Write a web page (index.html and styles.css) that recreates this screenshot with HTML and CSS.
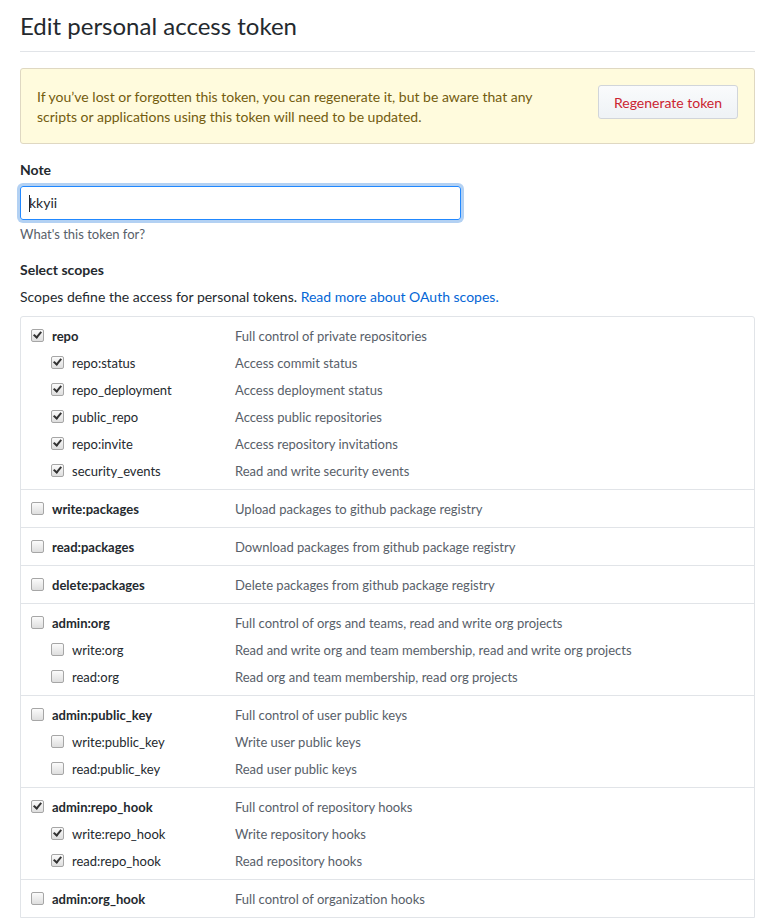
FILE: index.html
```html
<!DOCTYPE html>
<html lang="en">
<head>
<meta charset="utf-8">
<title>Edit personal access token</title>
<link rel="stylesheet" href="styles.css">
</head>
<body>
<div class="page">
  <h1 class="subhead">Edit personal access token</h1>

  <div class="flash">
    <p class="flash-text">If you’ve lost or forgotten this token, you can regenerate it, but be aware that any<br>scripts or applications using this token will need to be updated.</p>
    <button class="btn-danger" type="button">Regenerate token</button>
  </div>

  <div class="field">
    <label class="field-label">Note</label>
    <div class="input"><span class="caret"></span>kkyii</div>
    <p class="note">What's this token for?</p>
  </div>

  <div class="field">
    <div class="field-label">Select scopes</div>
    <p class="scopes-intro">Scopes define the access for personal tokens. <a href="#">Read more about OAuth scopes.</a></p>
  </div>

  <div class="scopes">
    <div class="group">
      <div class="row main"><span class="cb checked"></span><span class="name">repo</span><span class="desc">Full control of private repositories</span></div>
      <div class="row sub"><span class="cb checked"></span><span class="name">repo:status</span><span class="desc">Access commit status</span></div>
      <div class="row sub"><span class="cb checked"></span><span class="name">repo_deployment</span><span class="desc">Access deployment status</span></div>
      <div class="row sub"><span class="cb checked"></span><span class="name">public_repo</span><span class="desc">Access public repositories</span></div>
      <div class="row sub"><span class="cb checked"></span><span class="name">repo:invite</span><span class="desc">Access repository invitations</span></div>
      <div class="row sub"><span class="cb checked"></span><span class="name">security_events</span><span class="desc">Read and write security events</span></div>
    </div>
    <div class="group">
      <div class="row main"><span class="cb"></span><span class="name">write:packages</span><span class="desc">Upload packages to github package registry</span></div>
    </div>
    <div class="group">
      <div class="row main"><span class="cb"></span><span class="name">read:packages</span><span class="desc">Download packages from github package registry</span></div>
    </div>
    <div class="group">
      <div class="row main"><span class="cb"></span><span class="name">delete:packages</span><span class="desc">Delete packages from github package registry</span></div>
    </div>
    <div class="group">
      <div class="row main"><span class="cb"></span><span class="name">admin:org</span><span class="desc">Full control of orgs and teams, read and write org projects</span></div>
      <div class="row sub"><span class="cb"></span><span class="name">write:org</span><span class="desc">Read and write org and team membership, read and write org projects</span></div>
      <div class="row sub"><span class="cb"></span><span class="name">read:org</span><span class="desc">Read org and team membership, read org projects</span></div>
    </div>
    <div class="group">
      <div class="row main"><span class="cb"></span><span class="name">admin:public_key</span><span class="desc">Full control of user public keys</span></div>
      <div class="row sub"><span class="cb"></span><span class="name">write:public_key</span><span class="desc">Write user public keys</span></div>
      <div class="row sub"><span class="cb"></span><span class="name">read:public_key</span><span class="desc">Read user public keys</span></div>
    </div>
    <div class="group">
      <div class="row main"><span class="cb checked"></span><span class="name">admin:repo_hook</span><span class="desc">Full control of repository hooks</span></div>
      <div class="row sub"><span class="cb checked"></span><span class="name">write:repo_hook</span><span class="desc">Write repository hooks</span></div>
      <div class="row sub"><span class="cb checked"></span><span class="name">read:repo_hook</span><span class="desc">Read repository hooks</span></div>
    </div>
    <div class="group">
      <div class="row main"><span class="cb"></span><span class="name">admin:org_hook</span><span class="desc">Full control of organization hooks</span></div>
    </div>
  </div>
</div>
</body>
</html>
```

FILE: styles.css
```css
html, body {
  margin: 0;
  padding: 0;
  background: #fff;
}

body {
  font-family: "Lato", "Open Sans", sans-serif;
  font-size: 14px;
  line-height: 20px;
  color: #24292e;
}

.page {
  width: 735px;
  margin-left: 20px;
}

.subhead {
  margin: 0;
  padding: 11px 0 10px;
  font-size: 24px;
  line-height: 30px;
  font-weight: 400;
  border-bottom: 1px solid #e1e4e8;
}

.flash {
  margin-top: 16px;
  display: flex;
  justify-content: space-between;
  align-items: flex-start;
  padding: 16px;
  background: #fffbdd;
  border: 1px solid #dfd8c2;
  border-radius: 3px;
  color: #735c0f;
}

.flash-text {
  margin: 2px 0 0;
}

.btn-danger {
  width: 140px;
  height: 34px;
  padding: 0;
  font-family: inherit;
  font-size: 14px;
  color: #cb2431;
  background: linear-gradient(#fafbfc, #eff3f6 90%);
  border: 1px solid #d1d5da;
  border-radius: 3px;
}

.field {
  margin-top: 16px;
}

.field-label {
  display: block;
  font-weight: 700;
  line-height: 20px;
}

.input {
  margin-top: 6px;
  width: 439px;
  height: 32px;
  box-sizing: content-box;
  border: 1px solid #2188ff;
  border-radius: 3px;
  box-shadow: 0 0 0 3px rgba(3, 102, 214, 0.3);
  display: flex;
  align-items: center;
}

.input::before {
  content: "";
  width: 8px;
}

.caret {
  width: 1px;
  height: 17px;
  background: #24292e;
  margin-right: -1px;
}

.note {
  margin: 4px 0 0;
  font-size: 13px;
  line-height: 20px;
  color: #586069;
}

.scopes-intro {
  margin: 7px 0 0;
}

.scopes-intro a {
  color: #0366d6;
  text-decoration: none;
}

.scopes {
  margin-top: 9px;
  border: 1px solid #e1e4e8;
  border-radius: 3px 3px 0 0;
  font-size: 13px;
}

.group {
  padding: 9px 10px 8px;
}

.group + .group {
  border-top: 1px solid #e1e4e8;
}

.row {
  display: grid;
  grid-template-columns: 13px 191px 1fr;
  align-items: center;
}

.row.sub {
  margin-top: 7px;
  grid-template-columns: 13px 171px 1fr;
  padding-left: 20px;
}

.row .name {
  padding-left: 8px;
}

.row.main .name {
  font-weight: 700;
}

.desc {
  color: #586069;
}

.cb {
  width: 11px;
  height: 11px;
  border: 1px solid #a6a6a6;
  border-radius: 2px;
  background: linear-gradient(#fbfbfb, #dedede);
  position: relative;
  top: -1px;
}

.cb.checked::after {
  content: "";
  position: absolute;
  left: 3px;
  top: 0px;
  width: 3px;
  height: 6px;
  border: solid #333;
  border-width: 0 2px 2px 0;
  transform: rotate(40deg);
}
```
